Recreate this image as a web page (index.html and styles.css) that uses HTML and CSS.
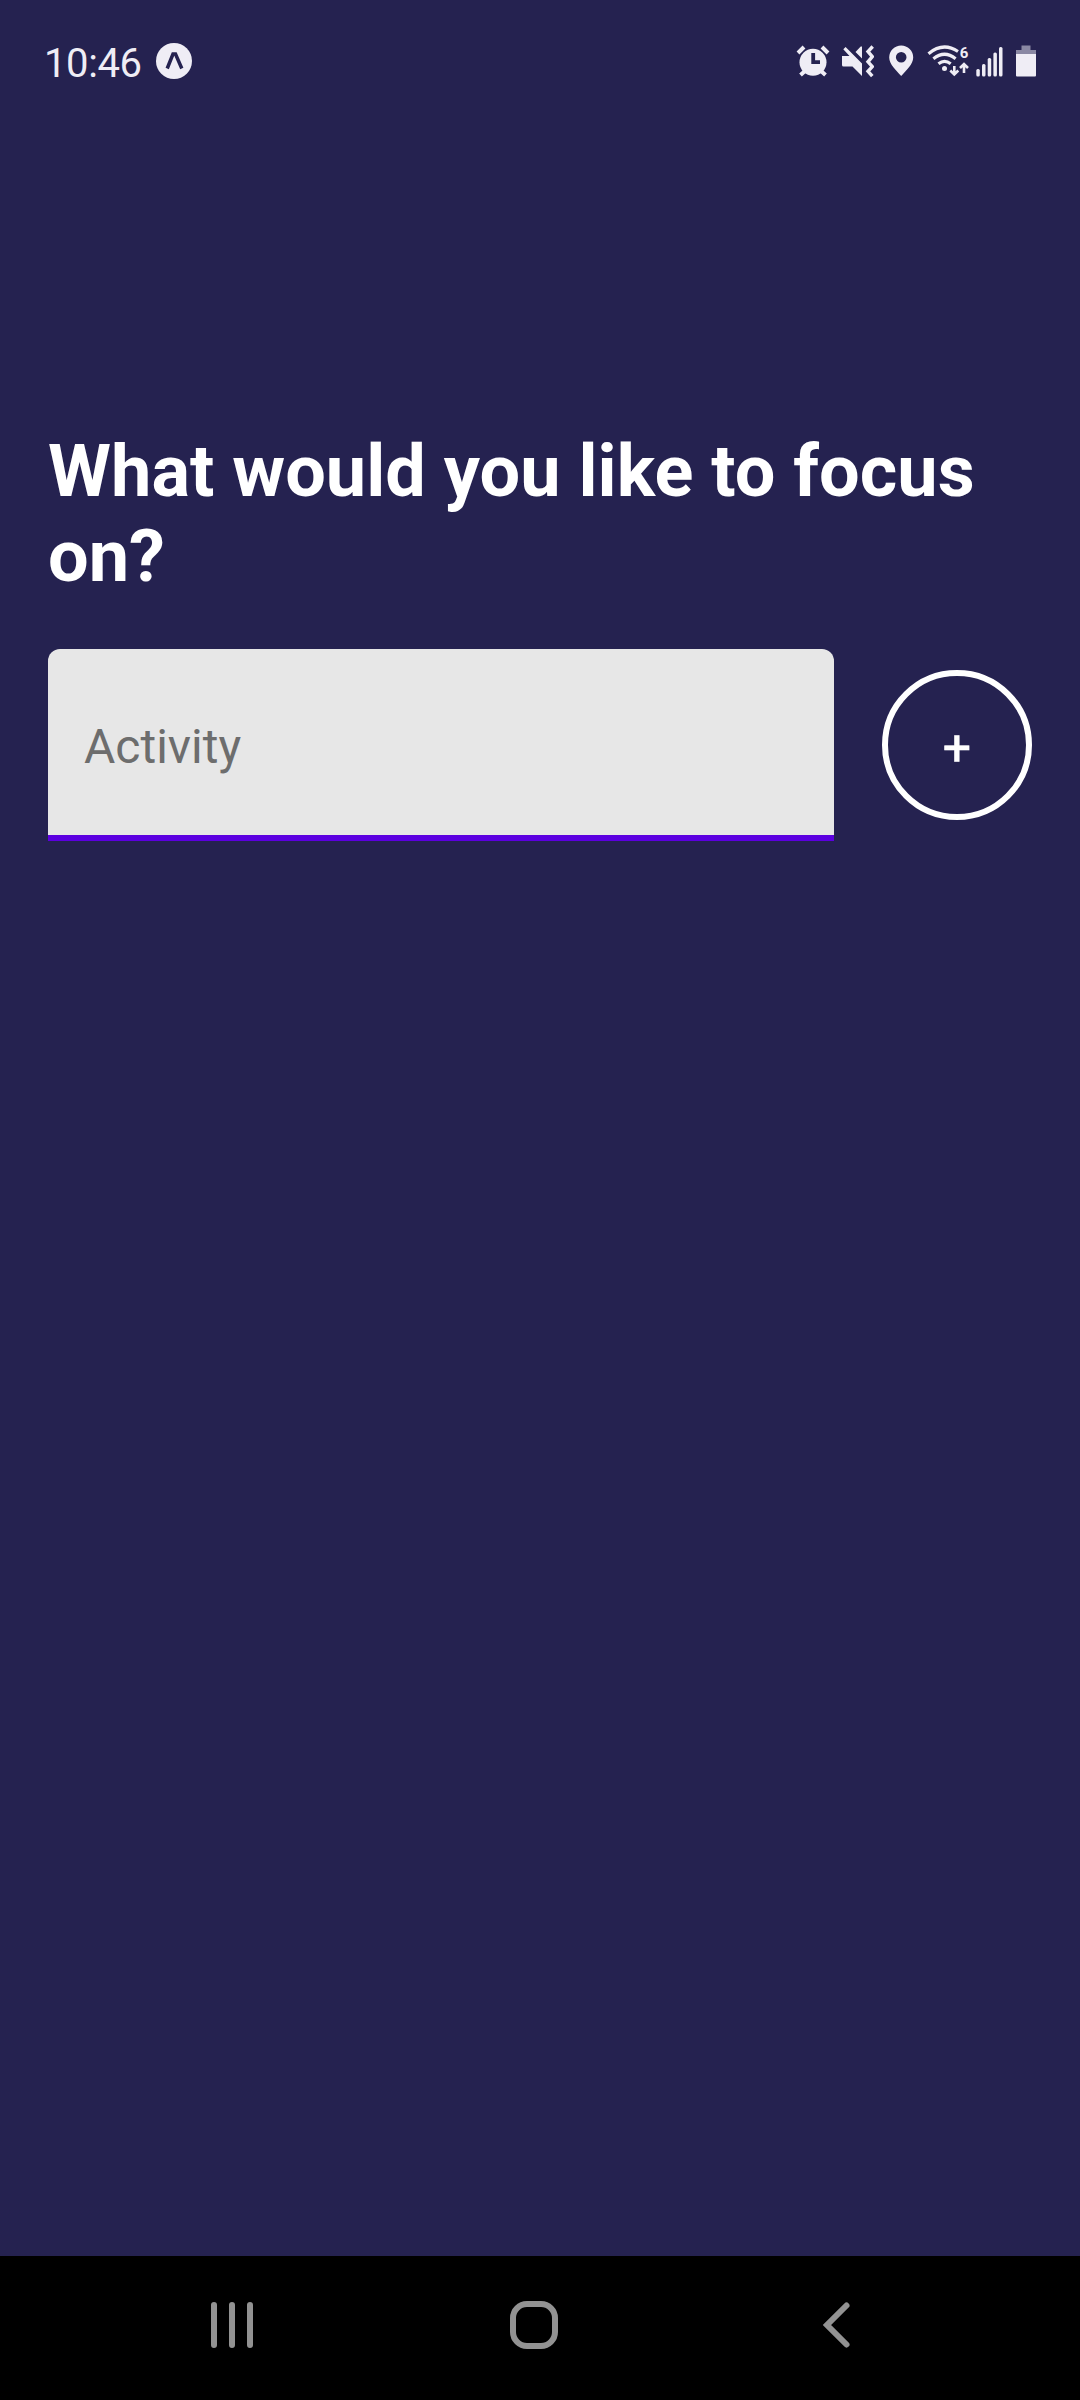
FILE: index.html
```html
<!DOCTYPE html>
<html lang="en">
<head>
<meta charset="utf-8">
<title>Focus</title>
<link rel="stylesheet" href="styles.css">
</head>
<body>
<div class="screen">
  <header class="status">
    <div class="status-left">
      <span class="clock">10:46</span>
      <svg class="expo" width="36" height="36" viewBox="0 0 36 36"><circle cx="18" cy="18" r="18"/><path d="M11.200 25.500 17 11h2.500L25.800 25.500" /></svg>
    </div>
    <div class="status-icons">
      <svg class="alarm" width="34" height="40" viewBox="0 0 34 40">
        <path class="line" d="m2 13 6-6M32 13l-6-6M9 31l-4.500 4M25 31l4.500 4" stroke-width="4"/>
        <circle cx="17" cy="22.300" r="13.500"/>
        <path class="cut" d="M17.200 13v9.200H24" stroke-width="3.800"/>
      </svg>
      <svg class="mute" width="32" height="40" viewBox="0 0 32 40">
        <path d="M0 16h7.500L1.300 9.300 3.600 7 20 23.500V36l-9.500-9.500H1.500Q0 26.500 0 25zM13.500 12 18.700 6.500H20V18.500z"/>
        <path class="line" d="m30.700 6.500-4.700 5 4.300 5.200-4.300 5.100 4.300 4.900-4.300 4.600 4.300 4.900" stroke-width="3.400"/>
      </svg>
      <svg class="pin" width="26" height="40" viewBox="0 0 26 40"><path fill-rule="evenodd" d="M12.200 5.500A12 12 0 0 1 24.200 17.500C24.200 24.500 17 30.500 12.200 36 7.400 30.500.2 24.500.2 17.500A12 12 0 0 1 12.200 5.500ZM12.200 12a5.300 5.300 0 1 0 0 10.600 5.300 5.300 0 0 0 0-10.600Z"/></svg>
      <svg class="wifi" width="42" height="40" viewBox="0 0 42 40">
        <path class="line" d="M1.500 13.700Q16 1.500 31 11.500M6.400 18.700Q17.500 9.800 28.600 18.700M11.500 23.700Q17.500 19 23.700 23.700" stroke-width="3.200"/>
        <circle cx="17.500" cy="28.500" r="2.500"/>
        <path class="line" d="M27.300 26v8m-4-3.500 4 4 4-4M37 33v-9m-4 4 4-4 4 4" stroke-width="2.600"/>
        <text x="32.800" y="17.600">6</text>
      </svg>
      <svg class="signal" width="28" height="40" viewBox="0 0 28 40"><rect x=".3" y="29" width="3.500" height="7.500" rx="1.500"/><rect x="6" y="24" width="3.500" height="12.500" rx="1.500"/><rect x="11.700" y="18" width="3.500" height="18.500" rx="1.500"/><rect x="17.400" y="12.500" width="3.500" height="24" rx="1.500"/><rect x="23" y="7" width="3.500" height="29.500" rx="1.500"/></svg>
      <svg class="battery" width="20" height="40" viewBox="0 0 20 40"><path opacity=".5" d="M5.500 5.500h9V10H20v4H0v-4h5.500z"/><path d="M0 14h20v21.500q0 1-1 1H1q-1 0-1-1z"/></svg>
    </div>
  </header>
  <main class="focus">
    <h1 class="title">What would you like to focus on?</h1>
    <div class="row">
      <input class="field" type="text" placeholder="Activity" aria-label="Activity">
      <button class="add" type="button">+</button>
    </div>
  </main>
  <nav class="nav">
    <svg width="48" height="48" viewBox="0 0 48 48"><path d="M6 4v40M24 4v40M42 4v40"/></svg>
    <svg width="48" height="48" viewBox="0 0 48 48"><rect x="3" y="3" width="42" height="42" rx="14"/></svg>
    <svg width="48" height="48" viewBox="0 0 48 48"><path d="M34.500 4.500 15 24l19.500 19.500"/></svg>
  </nav>
</div>
</body>
</html>
```
FILE: styles.css
```css
* { box-sizing: border-box; }
body { margin: 0; font-family: Roboto, sans-serif; background: #252250; }
.screen { display: flex; flex-direction: column; width: 1080px; height: 2400px; background: #252250; }
svg { display: block; flex: none; }

.status { display: flex; justify-content: space-between; height: 120px; padding: 40px 44px 0 44px; color: #efedf5; fill: #efedf5; }
.status-left { display: flex; align-items: flex-start; gap: 14px; }
.clock { width: 98px; font-size: 40px; line-height: 48px; letter-spacing: -0.4px; white-space: nowrap; }
.expo { margin-top: 3px; }
.expo path { fill: none; stroke: #252250; stroke-width: 3.500; }
.status-icons { display: flex; }
.line { fill: none; stroke: #efedf5; }
.cut { fill: none; stroke: #252250; }
.mute { margin-left: 12px; }
.pin { margin-left: 15px; }
.wifi { margin-left: 12px; }
.wifi text { font-size: 15px; font-weight: 700; }
.signal { margin-left: 7px; }
.battery { margin-left: 12px; }

.focus { flex: 1; padding: 309px 48px 0; }
.title { margin: 0; color: #fff; font-size: 72px; font-weight: 700; line-height: 85px; letter-spacing: 0.03px; }
.row { display: flex; align-items: center; gap: 48px; margin-top: 50px; }
.field { flex: 1; min-width: 0; height: 192px; padding: 8px 36px 0; border: 0; border-bottom: 6px solid #5c00e0; border-radius: 12px 12px 0 0; background: #e7e7e7; color: #000; font: 400 48px Roboto, sans-serif; outline: 0; }
.field::placeholder { color: #6d6d6d; opacity: 1; }
.add { width: 150px; height: 150px; padding: 5px 0 0; border: 6px solid #fff; border-radius: 50%; background: none; color: #fff; font: 400 50px/56px Roboto, sans-serif; -webkit-text-stroke: 0.6px #fff; }

.nav { display: flex; justify-content: space-between; align-items: center; height: 144px; padding: 0 220px 6px 208px; background: #000; fill: none; stroke: #929292; stroke-width: 6; stroke-linecap: round; }
```
